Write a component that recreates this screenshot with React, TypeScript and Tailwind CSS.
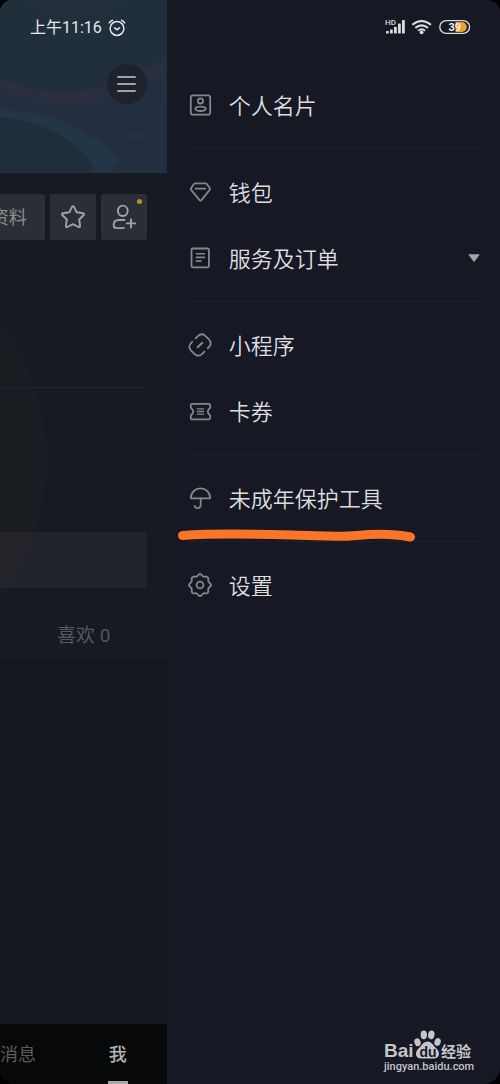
import React from 'react';

interface MenuItem {
  id: string;
  label: string;
  icon: React.ReactNode;
  expandable?: boolean;
  marked?: boolean;
}

// Wavy outline with eight lobes
const gearPath =
  Array.from({ length: 96 }, (_, i) => {
    const angle = (i / 96) * Math.PI * 2;
    const r = 10 + 0.9 * Math.cos(angle * 8);
    const x = (13 + r * Math.sin(angle)).toFixed(2);
    const y = (13 - r * Math.cos(angle)).toFixed(2);
    return `${i === 0 ? 'M' : 'L'}${x} ${y}`;
  }).join('') + 'Z';

const Icon: React.FC<{ children: React.ReactNode }> = ({ children }) => (
  <svg
    viewBox="0 0 26 26"
    className="w-[26px] h-[26px] shrink-0"
    fill="none"
    stroke="#85868c"
    strokeWidth="1.8"
    strokeLinecap="round"
    strokeLinejoin="round"
    aria-hidden="true"
  >
    {children}
  </svg>
);

const GROUPS: MenuItem[][] = [
  [
    {
      id: 'card',
      label: '个人名片',
      icon: (
        <Icon>
          <rect x="3.8" y="3.3" width="19.4" height="19.4" rx="2.2" />
          <circle cx="13.5" cy="8.9" r="2.6" />
          <ellipse cx="13.5" cy="16.8" rx="5.2" ry="2.2" />
        </Icon>
      ),
    },
  ],
  [
    {
      id: 'wallet',
      label: '钱包',
      icon: (
        <Icon>
          <path d="M8.2 4.4h10.4q.8 0 1.3.6l2.9 4.200q.6.9-.1 1.700l-8.300 10.200q-.9 1-1.800 0L4.100 10.900q-.7-.8-.1-1.700l2.900-4.200q.5-.6 1.300-.6Z" />
          <path d="M8.500 9.700h9.800" />
        </Icon>
      ),
    },
    {
      id: 'orders',
      label: '服务及订单',
      expandable: true,
      icon: (
        <Icon>
          <rect x="4.500" y="3.500" width="17.400" height="18.800" rx="1.200" />
          <path d="M9.400 8.700h8M9.400 12.400h8M9.400 16.100h4.600" strokeWidth="1.600" />
        </Icon>
      ),
    },
  ],
  [
    {
      id: 'mini',
      label: '小程序',
      icon: (
        <Icon>
          <g transform="rotate(-45 13 13)" strokeLinecap="butt">
            <path d="M10.500 5.200H8.700Q2.700 5.200 2.700 11v4Q2.700 20.800 8.700 20.800H12.200" />
            <path d="M13.800 5.200H17.300Q23.300 5.200 23.300 11v4Q23.300 20.800 17.300 20.800H15.500" />
            <path d="M9 13h8" strokeWidth="2.200" />
          </g>
        </Icon>
      ),
    },
    {
      id: 'coupon',
      label: '卡券',
      icon: (
        <Icon>
          <path d="M5.300 5.800h16.400q1.500 0 1.500 1.500v2q0 .7-.7 1.200a3.700 3.700 0 0 0 0 6.200q.7.500.7 1.200v2q0 1.500-1.500 1.500H5.300q-1.500 0-1.500-1.500v-2q0-.7.7-1.200a3.700 3.700 0 0 0 0-6.200q-.7-.5-.7-1.200v-2q0-1.500 1.500-1.500Z" />
          <path d="M10.300 10.800h6.400M10.300 13.500h6.400M10.300 16.200h6.400" strokeWidth="1.300" />
        </Icon>
      ),
    },
  ],
  [
    {
      id: 'minor',
      label: '未成年保护工具',
      marked: true,
      icon: (
        <Icon>
          <path d="M3.800 12.800C4.200 7.200 8 3.400 13.500 3.400S22.800 7.200 23.200 12.800q0 .6-.6.600H4.400q-.6 0-.6-.6Z" />
          <path d="M13.700 13.400v6.700a3.100 3.100 0 0 1-6.100.7" />
        </Icon>
      ),
    },
  ],
  [
    {
      id: 'settings',
      label: '设置',
      icon: (
        <Icon>
          <path d={gearPath} />
          <circle cx="13" cy="13" r="3.400" />
        </Icon>
      ),
    },
  ],
];

const ProfileHeader: React.FC = () => (
  <header className="relative h-[173px] bg-[#212e3c] overflow-hidden">
    <svg
      viewBox="0 0 167 173"
      preserveAspectRatio="none"
      className="absolute inset-0 w-full h-full"
      aria-hidden="true"
    >
      <path d="M0 84C55 108 112 103 167 64V173H0Z" fill="#232f40" />
      <path d="M20 0Q75 34 130 0Z" fill="#242f3e" />
      <path d="M0 77C55 102 112 96 167 55V72C112 110 55 114 0 90Z" fill="#2a2f40" />
      <path d="M0 117C45 121 75 140 96 168L92 173H0Z" fill="#202e3b" />
      <path d="M0 110C50 112 90 128 120 160L110 173H92L96 168C75 140 45 121 0 117Z" fill="#233648" />
      <path d="M126 136h19" stroke="#243a4e" strokeWidth="1.500" />
    </svg>

    <div className="relative flex items-center gap-1.5 pt-4 pl-[30px] text-[#e6e8ea]">
      <span className="text-base leading-6 whitespace-nowrap">上午11:16</span>
      <svg viewBox="0 0 18 18" className="w-[18px] h-[18px] shrink-0" fill="none" stroke="currentColor" strokeWidth="1.500" strokeLinecap="round" aria-label="闹钟">
        <circle cx="9" cy="9.500" r="6.900" />
        <path d="M6.600 8.900 9 10.700l2.500-1.900" />
        <path d="M1.300 3.900Q2.400 1.900 4.500 1.200M16.700 3.900Q15.600 1.900 13.500 1.200" />
      </svg>
    </div>

    <div className="relative flex justify-end pt-6 pr-5">
      <button
        aria-label="菜单"
        className="w-10 h-10 rounded-full bg-[#1e222d] flex flex-col items-center justify-center gap-[5px]"
      >
        <span className="w-[19px] h-0.5 rounded-full bg-[#a3a1a8]" />
        <span className="w-[19px] h-0.5 rounded-full bg-[#a3a1a8]" />
        <span className="w-[19px] h-0.5 rounded-full bg-[#a3a1a8]" />
      </button>
    </div>
  </header>
);

const ProfileColumn: React.FC = () => (
  <div className="w-1/3 shrink-0 flex flex-col overflow-hidden bg-[#14171e]">
    <ProfileHeader />

    <main className="relative bg-[#171a21] pt-[21px] pb-[9px] overflow-hidden">
      {/* Faint glow at the left edge */}
      <div className="absolute top-[54px] right-[120px] w-[466px] h-[466px] rounded-full bg-[#2a2a18]/15" />

      <div className="relative flex justify-end gap-[5px] pr-5">
        <button className="shrink-0 h-[46px] pl-5 pr-[18px] pt-0.5 rounded-xs bg-[#2b2e35] text-lg text-[#8c8d91]">
          资料
        </button>
        <button aria-label="收藏" className="w-[46px] h-[46px] shrink-0 rounded-xs bg-[#2b2e35] flex items-center justify-center">
          <svg viewBox="0 0 26 26" className="w-[26px] h-[26px]" fill="none" stroke="#a1a2a4" strokeWidth="1.900" strokeLinejoin="round">
            <path d="M12 2.900q1-1.500 2 0l2.700 5.300 6.300 1q1.700.5.700 1.800l-4.500 4.500.9 6.400q0 1.500-1.500 1.100L13 20.200 7.400 23q-1.500.4-1.500-1.100l.9-6.400L2.300 11q-1-1.300.7-1.800l6.300-1Z" />
          </svg>
        </button>
        <button aria-label="添加好友" className="relative w-[46px] h-[46px] shrink-0 rounded-xs bg-[#2b2e35] flex items-center justify-center">
          <svg viewBox="0 0 26 26" className="w-[26px] h-[26px]" fill="none" stroke="#a1a2a4" strokeWidth="1.900" strokeLinecap="round">
            <ellipse cx="11.800" cy="6.800" rx="4.900" ry="5.200" />
            <path d="M13.500 16H7.800Q2.700 16.200 2.700 20.800v.6q0 2.300 2.300 2.500 4 .5 8 0" />
            <path d="M20 15.200v8.400M15.800 19.400h8.400" />
          </svg>
          <span className="absolute top-[5px] right-[5px] w-[5px] h-[5px] rounded-full bg-[#b39421]" />
        </button>
      </div>

      <hr className="relative mt-[147px] mr-[19px] border-[#23262e]" />
      <div className="relative mt-36 mr-5 h-14 rounded-r-xs bg-[#2f3239]/40" />
      <p className="relative mt-[34px] pl-[57px] text-[19px] leading-7 text-[#55575c] whitespace-nowrap">喜欢 0</p>
    </main>

    <nav className="mt-auto h-[60px] bg-[#070808] flex justify-between pr-10 text-lg">
      <a href="#messages" className="flex items-center pt-0.5 text-[#5c5c5c]">消息</a>
      <a href="#me" className="relative flex items-center pt-0.5 font-medium text-[#b5b5b5]">
        我
        <span className="absolute bottom-0 left-1/2 -translate-x-1/2 w-5 h-[3px] bg-[#a9a9a9]" />
      </a>
    </nav>
  </div>
);

const StatusIcons: React.FC = () => (
  <div className="h-[62px] pt-[18px] pr-[29px] flex justify-end">
    <svg viewBox="0 0 86 18" className="w-[86px] h-[18px]" aria-label="状态栏">
      <g fill="#dcdcde">
        <text x="0" y="7" fontSize="8" fontWeight="500" fontFamily="Roboto, sans-serif">HD</text>
        <rect x="1" y="13" width="2.800" height="2.600" rx=".6" />
        <rect x="5" y="11.500" width="2.800" height="4.100" rx=".6" />
        <rect x="9" y="8.800" width="2.800" height="6.800" rx=".6" />
        <rect x="13" y="5.500" width="2.800" height="10.100" rx=".6" />
        <rect x="17" y="2" width="2.800" height="13.600" rx=".6" />
        <circle cx="36.600" cy="14.300" r="1.900" />
      </g>
      <g fill="none" stroke="#dcdcde" strokeWidth="2">
        <path d="M27.300 6.800Q36.600-.8 46 6.800" />
        <path d="M30.300 9.900Q36.600 4.800 43 9.900" />
        <path d="M33.200 12.700Q36.600 9.800 40.100 12.700" />
      </g>
      <path d="M70.500 4h6.300a5 5 0 0 1 5 5 5 5 0 0 1-5 5h-6.300Z" fill="#f2a02c" />
      <rect x="54.800" y="2.600" width="29.800" height="12.800" rx="6.400" fill="none" stroke="#dcdcde" strokeWidth="1.400" />
      <text x="63.500" y="13" fontSize="11" fontWeight="700" fontFamily="Roboto, sans-serif" fill="#f1f1f1">39</text>
    </svg>
  </div>
);

const BaiduMark: React.FC = () => (
  <svg viewBox="0 0 92 50" className="w-[92px] h-[50px]" fill="#c4c5c9" aria-label="Baidu 经验">
    <text x="1" y="31" fontSize="19" fontWeight="700" fontFamily="'Liberation Sans', sans-serif">Bai</text>
    <ellipse cx="34.500" cy="16.300" rx="3.100" ry="4" transform="rotate(-18 34.500 16.300)" />
    <ellipse cx="40.800" cy="8.800" rx="3.200" ry="4.400" />
    <ellipse cx="48.300" cy="8.800" rx="3.200" ry="4.400" transform="rotate(8 48.300 8.800)" />
    <ellipse cx="54.600" cy="16" rx="3.100" ry="4" transform="rotate(18 54.600 16)" />
    <path d="M44.500 15.500c4.500 0 5.500 4 8.500 6.500 5 4.500 3.500 10.500-2 10.500H38c-5.500 0-7-6-2-10.500 3-2.500 4-6.500 8.500-6.500Z" />
    <text x="36.500" y="30.500" fontSize="14" fontWeight="700" fontFamily="'Liberation Sans', sans-serif" fill="#161823">du</text>
    <text x="58" y="31" fontSize="15" fontWeight="700" fontFamily="'Noto Sans CJK SC', sans-serif">经验</text>
    <text x="1" y="44" fontSize="11" fontWeight="500" fontFamily="Roboto, sans-serif">jingyan.baidu.com</text>
  </svg>
);

const MenuRow: React.FC<{ item: MenuItem }> = ({ item }) => (
  <li className="relative">
    <button className="w-full h-[66px] flex items-center gap-4 text-left">
      {item.icon}
      <span className="flex-1 pt-0.5 text-[22px] font-[350] text-[#dedee0] whitespace-nowrap">{item.label}</span>
      {item.expandable && (
        <svg viewBox="0 0 12 8" className="w-3 h-2 shrink-0" fill="#a3a4a8" aria-hidden="true">
          <path d="M1 .2h10q.8.1.4.8L6.500 7.500q-.5.500-1 0L.6 1Q.2.300 1 .2Z" />
        </svg>
      )}
    </button>
    {item.marked && (
      <svg viewBox="0 0 240 16" className="absolute top-[62px] -left-2.5 w-60 h-4" fill="none" aria-hidden="true">
        <path
          d="M5.500 8.500C40 6 80 7 115 8S160 10.500 180 8.500 218 7 233.500 10"
          stroke="#fb7428"
          strokeWidth="9"
          strokeLinecap="round"
        />
      </svg>
    )}
  </li>
);

const App: React.FC = () => {
  return (
    <div className="min-h-screen bg-black font-['Roboto','Noto_Sans_CJK_SC',sans-serif]">
      <div className="min-h-screen flex rounded-t-xl rounded-b-2xl overflow-hidden bg-[#161823]">
        <ProfileColumn />

        {/* Side drawer */}
        <aside className="flex-1 min-w-0 flex flex-col">
          <StatusIcons />

          <div className="px-5">
            {GROUPS.map((group) => (
              <ul key={group[0].id} className="py-2.5 border-b border-[#1e202b] last:border-b-0">
                {group.map((item) => (
                  <MenuRow key={item.id} item={item} />
                ))}
              </ul>
            ))}
          </div>

          <footer className="mt-auto flex justify-end pr-[25px] pb-2">
            <BaiduMark />
          </footer>
        </aside>
      </div>
    </div>
  );
};

export default App;
